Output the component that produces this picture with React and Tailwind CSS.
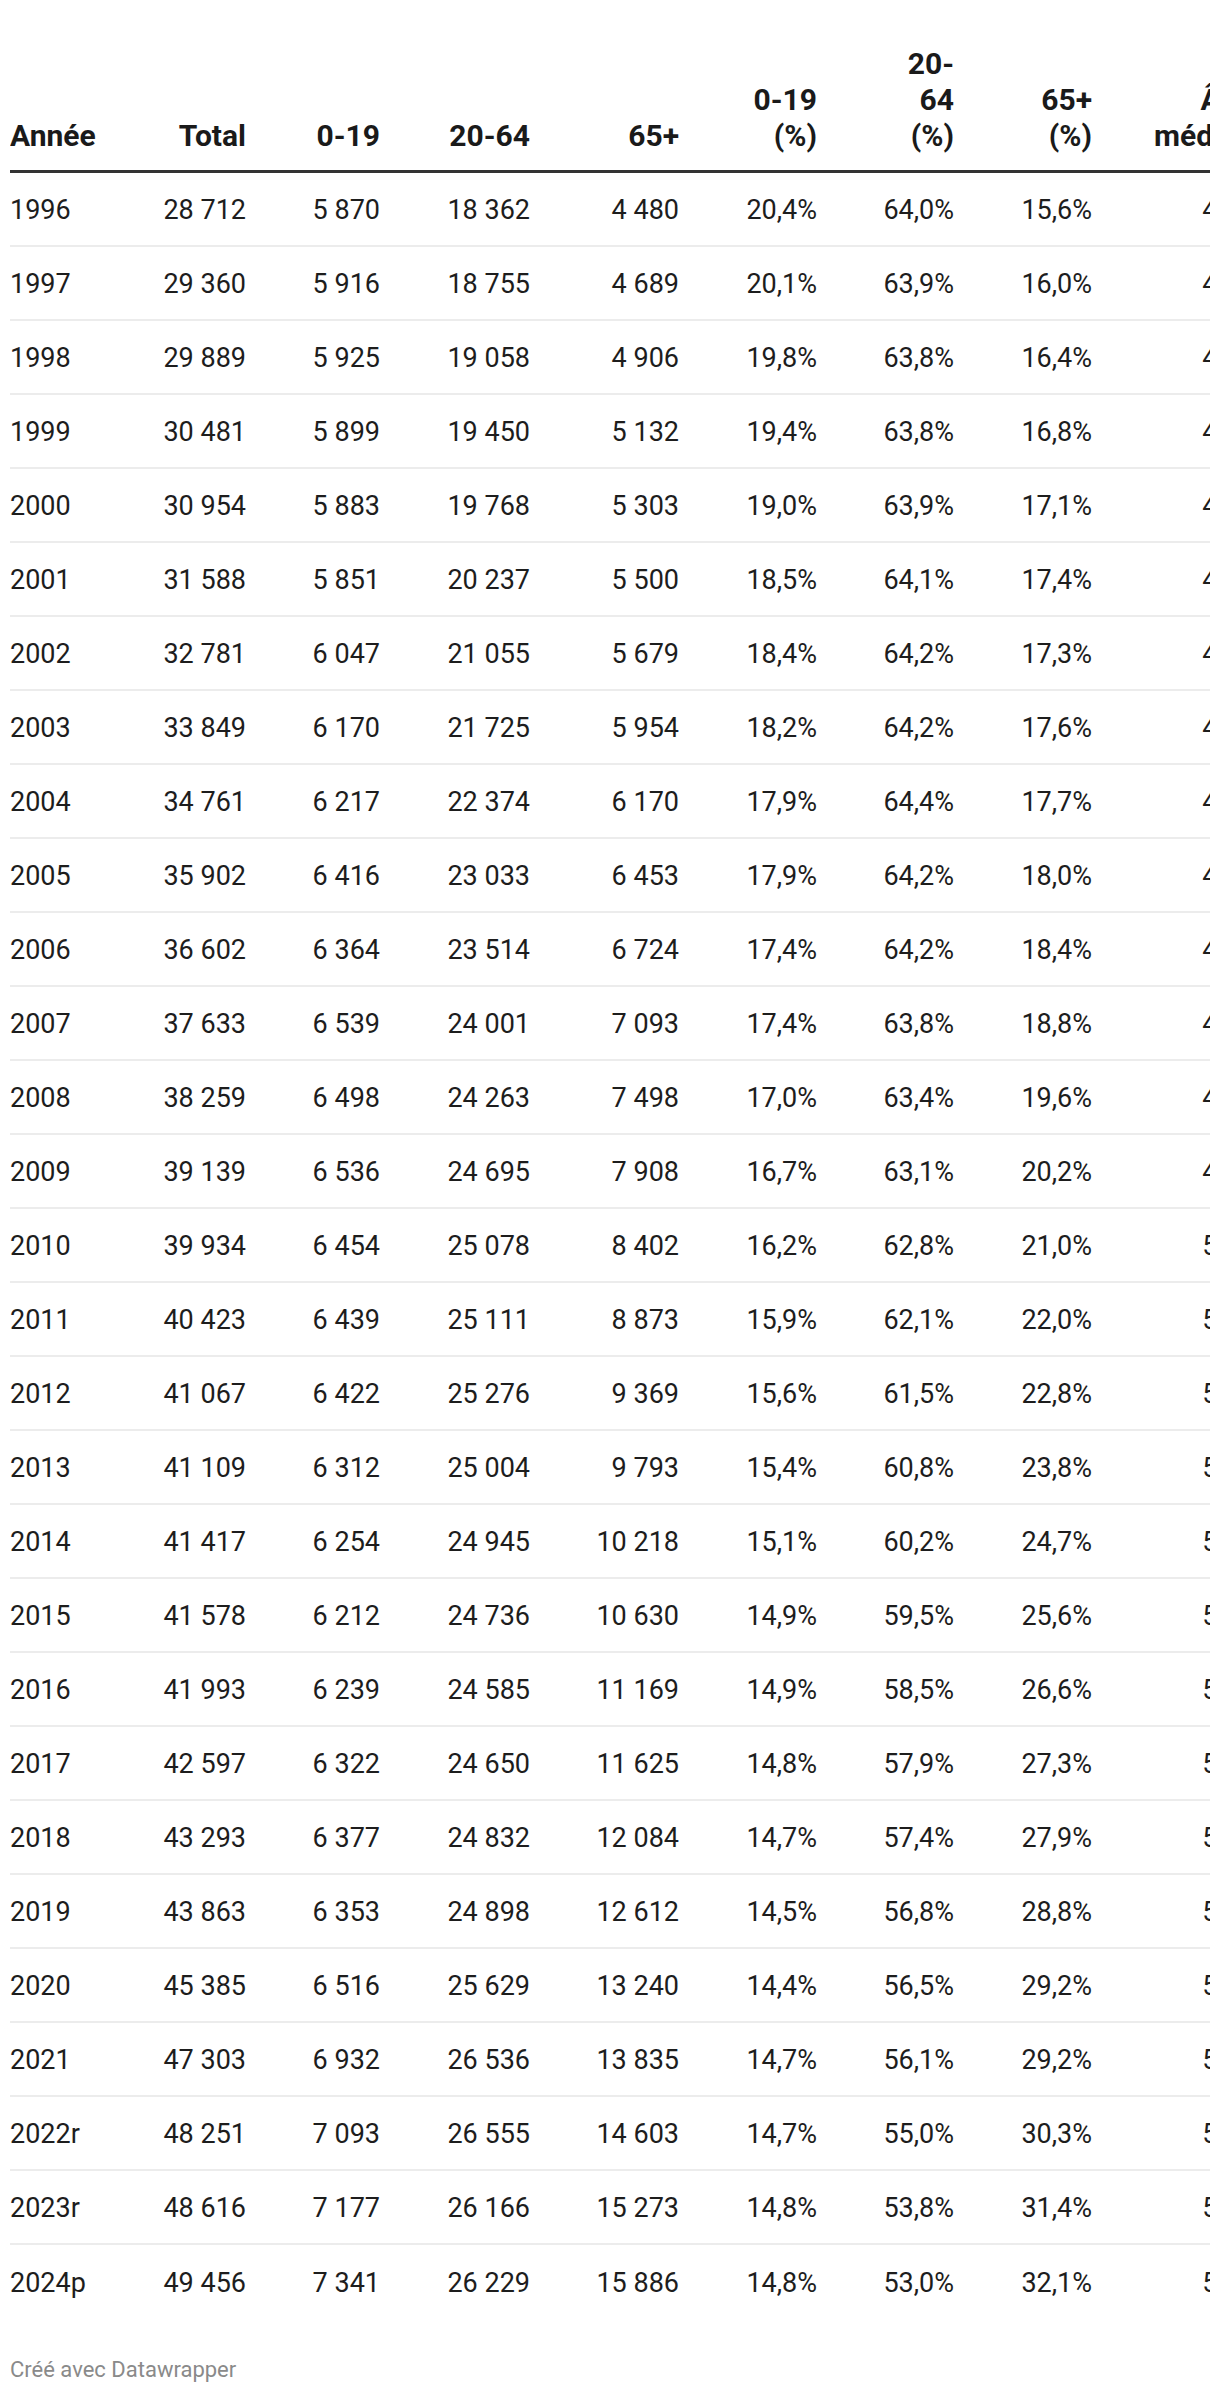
const COLS =
  "grid grid-cols-[130px_106px_134px_150px_149px_138px_137px_138px_166px]";

const HEADERS = [
  ["Année"],
  ["Total"],
  ["0-19"],
  ["20-64"],
  ["65+"],
  ["0-19", "(%)"],
  ["20-", "64", "(%)"],
  ["65+", "(%)"],
  ["Âge", "médian"],
];

// année | total | 0-19 | 20-64 | 65+ | % 0-19 | % 20-64 | % 65+ | âge médian
const DATA = `1996|28 712|5 870|18 362|4 480|20,4%|64,0%|15,6%|40,7
1997|29 360|5 916|18 755|4 689|20,1%|63,9%|16,0%|41,0
1998|29 889|5 925|19 058|4 906|19,8%|63,8%|16,4%|41,4
1999|30 481|5 899|19 450|5 132|19,4%|63,8%|16,8%|41,8
2000|30 954|5 883|19 768|5 303|19,0%|63,9%|17,1%|42,2
2001|31 588|5 851|20 237|5 500|18,5%|64,1%|17,4%|42,7
2002|32 781|6 047|21 055|5 679|18,4%|64,2%|17,3%|43,0
2003|33 849|6 170|21 725|5 954|18,2%|64,2%|17,6%|43,4
2004|34 761|6 217|22 374|6 170|17,9%|64,4%|17,7%|43,8
2005|35 902|6 416|23 033|6 453|17,9%|64,2%|18,0%|44,2
2006|36 602|6 364|23 514|6 724|17,4%|64,2%|18,4%|44,8
2007|37 633|6 539|24 001|7 093|17,4%|63,8%|18,8%|45,4
2008|38 259|6 498|24 263|7 498|17,0%|63,4%|19,6%|46,1
2009|39 139|6 536|24 695|7 908|16,7%|63,1%|20,2%|46,8
2010|39 934|6 454|25 078|8 402|16,2%|62,8%|21,0%|50,2
2011|40 423|6 439|25 111|8 873|15,9%|62,1%|22,0%|50,8
2012|41 067|6 422|25 276|9 369|15,6%|61,5%|22,8%|51,3
2013|41 109|6 312|25 004|9 793|15,4%|60,8%|23,8%|51,9
2014|41 417|6 254|24 945|10 218|15,1%|60,2%|24,7%|52,4
2015|41 578|6 212|24 736|10 630|14,9%|59,5%|25,6%|52,9
2016|41 993|6 239|24 585|11 169|14,9%|58,5%|26,6%|53,3
2017|42 597|6 322|24 650|11 625|14,8%|57,9%|27,3%|53,8
2018|43 293|6 377|24 832|12 084|14,7%|57,4%|27,9%|54,2
2019|43 863|6 353|24 898|12 612|14,5%|56,8%|28,8%|54,6
2020|45 385|6 516|25 629|13 240|14,4%|56,5%|29,2%|55,0
2021|47 303|6 932|26 536|13 835|14,7%|56,1%|29,2%|55,1
2022r|48 251|7 093|26 555|14 603|14,7%|55,0%|30,3%|55,3
2023r|48 616|7 177|26 166|15 273|14,8%|53,8%|31,4%|55,6
2024p|49 456|7 341|26 229|15 886|14,8%|53,0%|32,1%|55,8`
  .split("\n")
  .map((line) => line.split("|").map((v) => v.replace(/ /g, "\u00a0")));

const cellClass = (i) =>
  i === 0 ? "whitespace-nowrap text-left"
  : i === 8 ? "whitespace-nowrap pr-[5px] text-right"
  : "whitespace-nowrap text-right";

export default function App() {
  return (
    <div className="min-h-[2394px] bg-white px-[10px] pt-[46px] pb-[10px] font-['Roboto','Liberation_Sans',sans-serif] antialiased">
      <div className="w-[1200px] overflow-hidden">
        <div className="w-[1257px]">
          <div
            className={[
              COLS,
              "items-end border-b-[3px] border-[#333333] pb-[16px] text-[30px] font-bold leading-[36px] text-[#1a1a1a]",
            ].join(" ")}
          >
            {HEADERS.map((lines, i) => (
              <div
                key={i}
                className={
                  i === 0 ? "text-left"
                  : i === 8 ? "pr-[4px] text-right"
                  : "text-right"
                }
              >
                {lines.map((l) => (
                  <div key={l}>{l}</div>
                ))}
              </div>
            ))}
          </div>

          {DATA.map((row, r) => (
            <div
              key={row[0]}
              className={[
                COLS,
                "h-[74px] items-center pt-[2px] text-[27px] text-[#1d1d1d]",
                r < DATA.length - 1 ? "border-b-2 border-[#ececec]" : "",
              ].join(" ")}
            >
              {row.map((cell, i) => (
                <div key={i} className={cellClass(i)}>
                  {cell}
                </div>
              ))}
            </div>
          ))}
        </div>
      </div>

      <div className="mt-[37px] text-[22px] leading-[28px] text-[#8a8a8a]">
        Créé avec Datawrapper
      </div>
    </div>
  );
}
